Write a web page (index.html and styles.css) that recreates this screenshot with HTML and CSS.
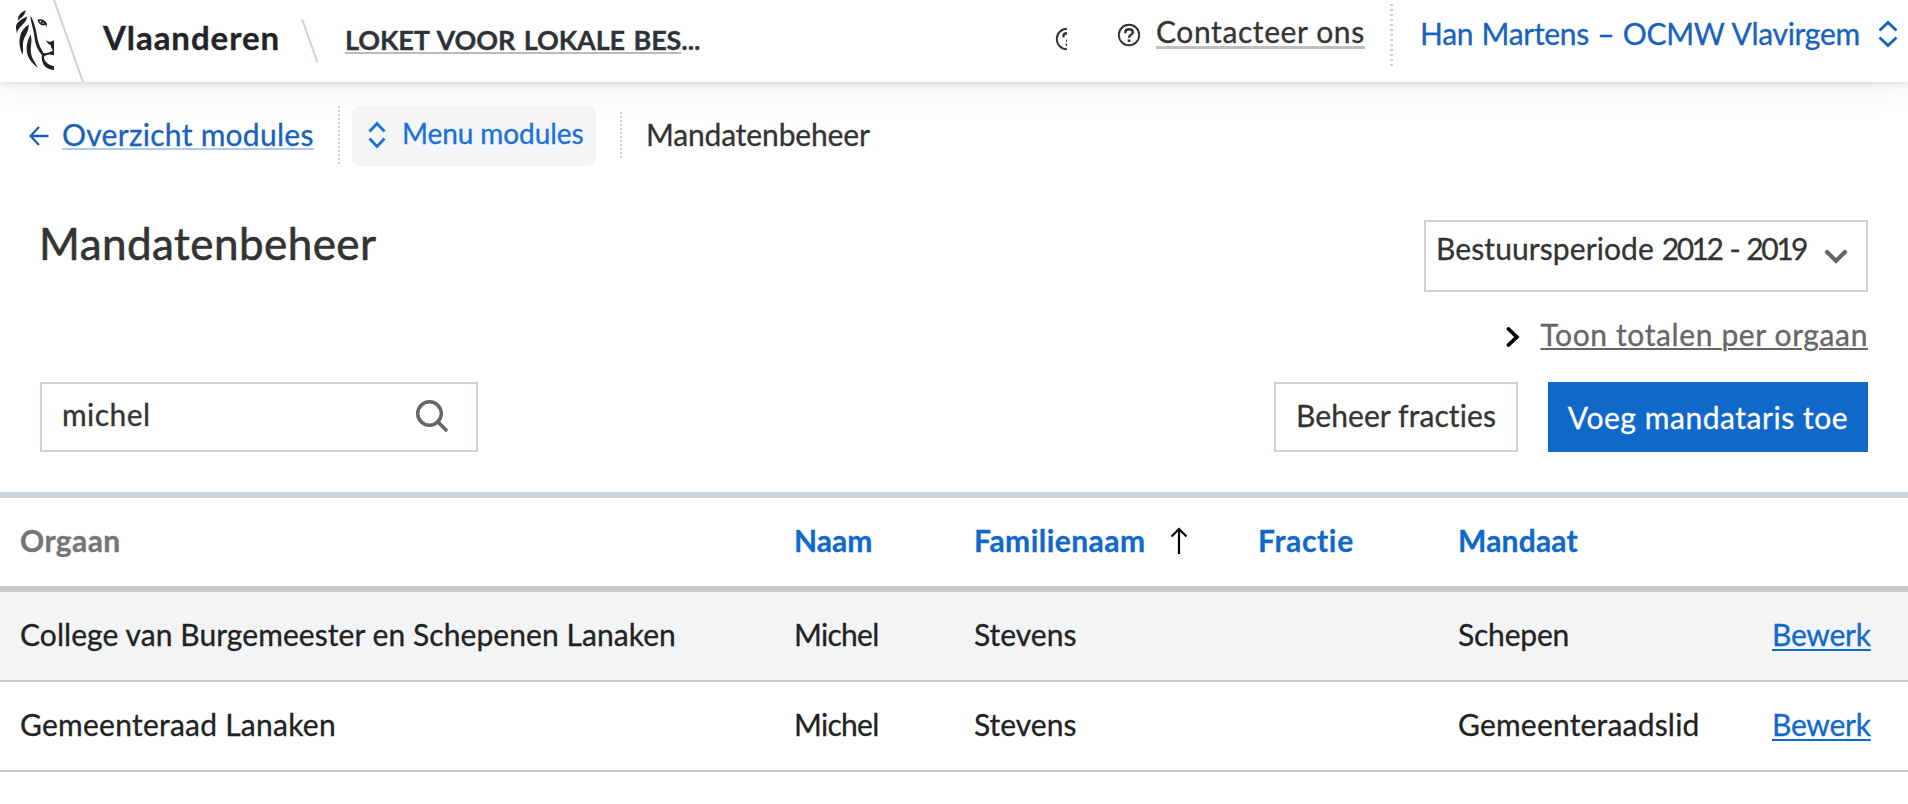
FILE: index.html
```
<!DOCTYPE html>
<html lang="nl">
<head>
<meta charset="utf-8">
<title>Mandatenbeheer</title>
<link rel="stylesheet" href="styles.css">
</head>
<body>
<header class="header">
  <svg class="logo" width="103" height="82" viewBox="0 0 103 82">
    <path d="M54 0L83 82" stroke="#cbd2da" stroke-width="2" fill="none"/>
    <g fill="#1f2126">
      <path d="M25.7 10.3C21 12.3 17.6 15.5 17.8 20.8C20 17.8 24.5 17.2 25.7 10.3z"/>
      <path d="M27.2 16.8C21.5 18.8 16 22.5 16 27C16 29 16.6 31.5 17 33.5C17.5 26.5 26.5 24 27.2 16.8z"/>
      <path d="M28.7 24.5C19.5 30 16.8 42 22.3 54.5C24.5 50 21.5 45.5 24 39C25.8 34.5 28.8 31 28.7 24.5z"/>
      <path d="M30.5 34.5C24.5 46 24.5 58 37.8 67.5C34.5 61 30.5 57.5 30.8 49C31 43.5 32.3 40 30.5 34.5z"/>
      <path d="M30.3 15.5C31 24 33.5 28 34.3 36C35.2 45 38 50.5 42 55L43.5 53C40.5 47.5 38 43.5 37 36C36 28.5 33.5 20 30.3 15.5z"/>
      <path d="M45.8 39.8C48 42.5 51 42.2 54 40.3V51C52 49.3 50.5 47.5 50.8 45.3C49 44.5 46.8 43 45.8 39.8z"/>
      <path d="M41 53C46 53.5 51 53 54 49.5V55.2C50 54 46.5 54.2 43.8 57z"/>
      <path d="M41.8 54.5C41 64 45 69 54 70V66C49 65.5 44 62 43.8 56z"/>
      <path d="M37.5 19.8C41 18.5 44.5 20 46.8 23.3V27.5L45.3 24.8C42 26.5 39 24.5 37.5 19.8zM39.5 21C40.5 23.5 42 24 44.3 23.3C43.3 21.5 41.5 20.5 39.5 21z" fill-rule="evenodd"/>
      <circle cx="42" cy="22.2" r="1.3"/>
    </g>
  </svg>
  <span class="brand">Vlaanderen</span>
  <svg class="slash" width="20" height="82" viewBox="0 0 20 82"><path d="M2 19L17.5 62.5" stroke="#cbd2da" stroke-width="2"/></svg>
  <div class="app"><a class="app-link">LOKET VOOR LOKALE BES</a>...</div>
  <svg class="help-cut" width="12" height="24" viewBox="0 0 12 24"><use href="#help"/></svg>
  <svg class="help" width="24" height="24" viewBox="0 0 24 24">
    <g id="help" fill="none" stroke="#333"><circle cx="12" cy="12" r="10.2" stroke-width="1.9"/><path d="M8.4 10.2V9.3C8.4 5.3 15.8 5.3 15.8 9.3C15.8 12 12 11.5 12 14.8" stroke-width="2.4"/><path d="M12 16.4V19" stroke-width="2.6"/></g>
  </svg>
  <a class="contact">Contacteer ons</a>
  <i class="dots dots-user"></i>
  <a class="user">Han Martens – OCMW Vlavirgem</a>
  <svg class="user-icon" width="20" height="28" viewBox="0 0 20 28"><path d="M1.5 10.5L10 2.5L18.5 10.5M1.5 17.5L10 25.5L18.5 17.5" fill="none" stroke="#1862bd" stroke-width="2.8"/></svg>
</header>
<nav class="crumbs">
  <svg class="back-icon" width="20" height="20" viewBox="0 0 20 20"><path d="M10 1L1.5 10L10 19M1.5 10H19.5" fill="none" stroke="#1862bd" stroke-width="2.3"/></svg>
  <a class="back">Overzicht modules</a>
  <i class="dots dots-back"></i>
  <button class="menu">
    <svg width="18" height="28" viewBox="0 0 18 28"><path d="M1.5 10.5L9 2.5L16.5 10.5M1.5 17.5L9 25.5L16.5 17.5" fill="none" stroke="#1a70db" stroke-width="2.8"/></svg>
    <span>Menu modules</span>
  </button>
  <i class="dots dots-here"></i>
  <span class="here">Mandatenbeheer</span>
</nav>
<main>
  <section class="heading">
    <h1 class="title">Mandatenbeheer</h1>
    <div class="period-block">
      <div class="period">
        <span>Bestuursperiode <span class="years">2012 - 2019</span></span>
        <svg class="period-icon" width="24" height="16" viewBox="0 0 24 16"><path d="M3 3L12 11.8L21 3" fill="none" stroke="#666" stroke-width="4.2" stroke-linecap="round"/></svg>
      </div>
      <div class="totals">
        <svg class="totals-icon" width="14" height="20" viewBox="0 0 14 20"><path d="M2.5 2L10.8 10L2.5 18" fill="none" stroke="#000" stroke-width="3.8" stroke-linecap="round"/></svg>
        <a class="totals-link">Toon totalen per orgaan</a>
      </div>
    </div>
  </section>
  <section class="tools">
    <div class="search">
      <span>michel</span>
      <svg width="34" height="34" viewBox="0 0 34 34"><circle cx="14.5" cy="14.5" r="11.8" fill="none" stroke="#666" stroke-width="3.5"/><path d="M23 23L31 31" stroke="#666" stroke-width="3.7" stroke-linecap="round"/></svg>
    </div>
    <button class="btn">Beheer fracties</button>
    <button class="btn btn-primary">Voeg mandataris toe</button>
  </section>
  <div class="table">
    <div class="row head">
      <span class="muted">Orgaan</span><span class="t-naam">Naam</span>
      <span class="sorted"><span>Familienaam</span><svg width="18" height="28" viewBox="0 0 18 28"><path d="M9 27V2M1.5 9.5L9 2L16.5 9.5" fill="none" stroke="#000" stroke-width="2.2"/></svg></span>
      <span class="t-fractie">Fractie</span><span class="t-mandaat">Mandaat</span><span></span>
    </div>
    <div class="row shaded">
      <span class="t-college">College van Burgemeester en Schepenen Lanaken</span><span class="t-michel">Michel</span><span>Stevens</span><span></span><span class="t-schepen">Schepen</span><a class="edit">Bewerk</a>
    </div>
    <div class="row">
      <span class="t-raad">Gemeenteraad Lanaken</span><span class="t-michel">Michel</span><span>Stevens</span><span></span><span class="t-lid">Gemeenteraadslid</span><a class="edit">Bewerk</a>
    </div>
  </div>
</main>
</body>
</html>
```
FILE: styles.css
```
* { box-sizing: border-box; }
body { margin: 0; background: #fff; color: #333; font: 30px/36px Lato, "Open Sans", sans-serif; -webkit-text-stroke: .3px; }
svg { display: block; flex: none; }
a, span { white-space: nowrap; }
button { font: inherit; }

.header { display: flex; align-items: flex-start; height: 82px; background: #fff; box-shadow: 0 2px 6px rgba(0,0,0,.12), 0 6px 36px rgba(0,0,0,.055); }
.brand { width: 197px; padding-top: 17px; font-size: 33px; line-height: 40px; font-weight: 700; letter-spacing: .95px; color: #222429; }
.app { width: 711px; padding: 24px 0 0 25px; font-size: 27px; line-height: 32px; font-weight: 700; letter-spacing: -.1px; word-spacing: 2px; color: #2f3238; }
.app-link { text-decoration: underline 2px #b9bbbd; text-underline-offset: 2px; text-decoration-skip-ink: none; }
.slash { width: 20px; }
.help-cut { margin: 27px 0 0 24px; }
.help { margin: 23px 0 0 50px; }
.contact { width: 234px; margin-left: 15px; padding-top: 13px; letter-spacing: .6px; text-decoration: underline 2.5px #bfbfbf; text-underline-offset: 2.5px; text-decoration-skip-ink: none; }
.dots { flex: none; width: 2px; background: repeating-linear-gradient(#cbd2da 0 2px, transparent 2px 4px); }
.dots-user { height: 64px; margin: 4px 0 0; width: 3px; background: repeating-linear-gradient(#cbd2da 0 2.5px, transparent 2.5px 5px); }
.user { width: 458px; margin-left: 27px; padding-top: 15px; letter-spacing: -.3px; word-spacing: 1px; color: #1862bd; }
.user-icon { margin-top: 20px; }

.crumbs { display: flex; align-items: flex-start; height: 138px; padding: 24px 0 0 29px; }
.back-icon { margin-top: 20px; }
.back { width: 276px; margin: 10px 0 0 13px; letter-spacing: .28px; color: #1862bd; text-decoration: underline 2px #b3cbea; text-underline-offset: 2px; text-decoration-skip-ink: none; }
.dots-back { height: 60px; }
.menu { display: flex; align-items: flex-start; gap: 16px; width: 244px; height: 60px; margin-left: 12px; padding: 15px 0 0 16px; border: 0; border-radius: 8px; background: #f3f5f6; color: #1a70db; font-size: 28px; line-height: 34px; letter-spacing: -.08px; }
.menu span { margin-top: -5px; }
.dots-here { height: 48px; margin: 6px 0 0 24px; }
.here { margin: 10px 0 0 24px; letter-spacing: -.15px; }

.heading { display: flex; justify-content: space-between; height: 162px; padding: 0 40px 0 39px; }
.title { margin: -3px 0 0; font-size: 44px; line-height: 53px; font-weight: 400; letter-spacing: .45px; -webkit-text-stroke: .6px; }
.period-block { display: flex; flex-direction: column; align-items: flex-end; gap: 24px; }
.period { display: flex; align-items: flex-start; justify-content: space-between; width: 444px; height: 72px; padding: 8px 18px 0 10px; border: 2px solid #cbd2da; letter-spacing: .1px; }
.years { letter-spacing: -2.5px; word-spacing: 3px; }
.period-icon { margin-top: 19px; }
.totals { display: flex; align-items: flex-start; gap: 20px; color: #666; letter-spacing: .62px; }
.totals-icon { margin-top: 11px; }
.totals-link { text-decoration: underline 2px; text-underline-offset: 2px; }

.tools { display: flex; height: 110px; padding: 0 40px; align-items: flex-start; }
.search { display: flex; justify-content: space-between; width: 438px; height: 70px; margin-right: auto; padding: 12px 27px 0 20px; border: 2px solid #cbd2da; letter-spacing: .44px; }
.search svg { margin-top: 3px; }
.btn { width: 244px; height: 70px; margin-left: 30px; padding: 0 0 5px; border: 2px solid #cbd2da; background: #fff; color: #333; line-height: 36px; letter-spacing: .1px; }
.btn-primary { width: 320px; padding: 0; border: 0; background: #1068cb; color: #fff; letter-spacing: .55px; }

.row { display: grid; grid-template-columns: 774px 180px 284px 200px 314px auto; align-items: start; height: 90px; padding: 24px 0 0 20px; border-bottom: 2px solid #ccc; color: #222; }
.head { height: 100px; border-top: 6px solid #cbd2d7; border-bottom: 6px solid #ccc; color: #1068cb; font-weight: 700; }
.shaded { background: #f3f4f6; }
.muted { color: #757575; letter-spacing: .4px; }
.t-naam { letter-spacing: 0; }
.sorted { display: flex; gap: 25px; letter-spacing: .45px; }
.sorted svg { margin-top: 5px; }
.t-fractie { letter-spacing: .65px; }
.t-mandaat { letter-spacing: .2px; }
.t-college { letter-spacing: .07px; }
.t-raad { letter-spacing: .25px; }
.t-michel { letter-spacing: -.7px; }
.t-schepen { letter-spacing: -.2px; }
.t-lid { letter-spacing: .2px; }
.edit { justify-self: start; color: #1068cb; letter-spacing: -.25px; text-decoration: underline 2px; text-underline-offset: 3px; }
```
